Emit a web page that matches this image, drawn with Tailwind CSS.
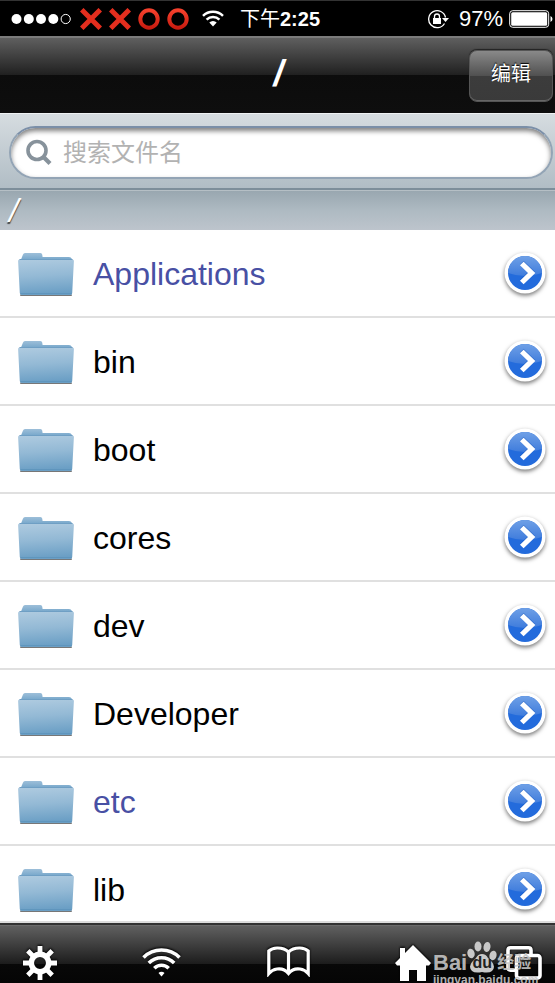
<!DOCTYPE html>
<html lang="zh-CN">
<head>
<meta charset="utf-8">
<meta name="viewport" content="width=device-width, initial-scale=1">
<title>/</title>
<script src="https://cdn.jsdelivr.net/npm/@tailwindcss/browser@4"></script>
</head>
<body class="relative flex h-screen flex-col overflow-hidden bg-white font-['Liberation_Sans','Noto_Sans_CJK_SC',sans-serif]">
<svg class="absolute size-0" aria-hidden="true">
  <defs>
    <linearGradient id="red" x1="0" y1="0" x2="0" y2="1"><stop offset="0" stop-color="#f5402c"/><stop offset="1" stop-color="#c91c10"/></linearGradient>
    <linearGradient id="back" x1="0" y1="0" x2="0" y2="1"><stop offset="0" stop-color="#9dbfd9"/><stop offset="1" stop-color="#6a9fc6"/></linearGradient>
    <linearGradient id="front" x1="0" y1="0" x2=".1" y2="1"><stop offset="0" stop-color="#afcbe0"/><stop offset=".5" stop-color="#93b9d5"/><stop offset="1" stop-color="#6b9fc5"/></linearGradient>
    <linearGradient id="gloss" x1="0" y1="0" x2="0" y2="1"><stop offset="0" stop-color="#6fa0e6"/><stop offset="1" stop-color="#3f7cdc"/></linearGradient>
    <symbol id="folder" viewBox="0 0 58 46">
      <path d="M3 43.500h52v.7q0 .8-1 .8H4q-1 0-1-.8z" fill="#777"/>
      <path d="M4 8.500 6 3.500Q6.500 2 8 2h15.500q1.500 0 1.700 1.500l.4 2.500H52q2 0 3 2l1 3H3z" fill="url(#back)"/>
      <path d="M2.500 8.500h53q1.500 0 1.400 1.600L55.200 42q-.1 2-1.700 2h-49q-1.600 0-1.700-2L1.100 10.100Q1 8.500 2.500 8.500z" fill="url(#front)"/>
      <path d="M2.500 8.500h53" stroke="#6f9fc4" stroke-width="1"/>
      <path d="M3.500 42.500h51" stroke="#5c93bb" stroke-width=".8"/>
    </symbol>
    <symbol id="go" viewBox="0 0 48 50">
      <circle cx="24" cy="24" r="20.500" fill="#fff"/>
      <circle cx="24" cy="24" r="17" fill="#236bdc"/>
      <path d="M7 24a17 17 0 0 1 34 0Q24 30 7 24z" fill="url(#gloss)"/>
      <path d="m20.800 13.500 9.800 9.500-9.800 9.500" fill="none" stroke="#1250b5" stroke-opacity=".4" stroke-width="5.200"/>
      <path d="m20.800 14.500 9.800 9.500-9.800 9.500" fill="none" stroke="#fff" stroke-width="5.200"/>
    </symbol>
    <symbol id="cross" viewBox="0 0 22 22"><path d="m3.500 3.500 15 15M18.500 3.500l-15 15" stroke="#e42e1e" stroke-width="5" stroke-linecap="square"/></symbol>
    <symbol id="ring" viewBox="0 0 22 22"><circle cx="11" cy="11" r="8.700" fill="none" stroke="url(#red)" stroke-width="4"/></symbol>
  </defs>
</svg>

<div class="flex h-9 shrink-0 items-center border-t border-[#333] bg-black pl-[11px] pr-[2px] text-white">
  <svg class="h-3 w-[61px]" viewBox="0 0 61 12" role="img" aria-label="4/5"><g fill="#fff"><circle cx="5.500" cy="6" r="5"/><circle cx="17.800" cy="6" r="5"/><circle cx="30" cy="6" r="5"/><circle cx="42.300" cy="6" r="5"/></g><circle cx="54.700" cy="6" r="4.600" fill="none" stroke="#fff"/></svg>
  <div class="ml-2 flex items-center gap-[7px]">
    <svg class="size-[22px]"><use href="#cross"/></svg>
    <svg class="size-[22px]"><use href="#cross"/></svg>
    <svg class="size-[22px]"><use href="#ring"/></svg>
    <svg class="size-[22px]"><use href="#ring"/></svg>
  </div>
  <svg class="ml-[13px] h-[17px] w-[22px]" viewBox="0 0 22 17"><path d="M1 5.800a14.300 14.300 0 0 1 20 0M4.600 9.600a9.200 9.200 0 0 1 12.800 0" fill="none" stroke="#fff" stroke-width="2.500"/><path d="M7.300 12.600a5.300 5.300 0 0 1 7.400 0L11 16.500z" fill="#fff"/></svg>
  <div class="ml-4 text-xl leading-6"><span>下午</span><span class="font-bold">2:25</span></div>
  <svg class="ml-auto h-5 w-[22px]" viewBox="0 0 22 20"><path d="M17.500 14.500a8.500 8.500 0 1 1 1-6" fill="none" stroke="#fff" stroke-width="1.300"/><path d="M15 9h7l-3.500 4z" fill="#fff"/><rect x="6" y="9" width="8" height="6" fill="#fff"/><path d="M7.500 9.500V7.500a2.500 2.500 0 0 1 5 0v2" fill="none" stroke="#fff" stroke-width="1.300"/></svg>
  <span class="ml-[10px] text-[22px] leading-6">97%</span>
  <svg class="ml-[6px] h-[18px] w-11" viewBox="0 0 44 18"><rect x=".7" y=".7" width="39" height="16.600" rx="3" fill="none" stroke="#fff" stroke-width="1"/><rect x="2.200" y="2.200" width="36" height="13.600" rx="1.500" fill="#fff"/><path d="M41.500 6q2 1 2 3t-2 3z" fill="#fff"/></svg>
</div>

<header class="grid h-[77px] shrink-0 grid-cols-[1fr_auto_1fr] items-center border-t-2 border-[#7b7b7b] bg-[linear-gradient(#5f5f5f_0,#1f1f1f_50%,#0c0c0c_50%,#0e0e0e_100%)] pr-[2px]">
  <h1 class="col-start-2 pb-1 pl-1 text-4xl font-bold italic leading-10 text-white">/</h1>
  <button class="h-[52px] w-[84px] justify-self-end rounded-lg border border-[#555] bg-[linear-gradient(#898989_0,#505050_50%,#3c3c3c_51%,#3a3a3a_100%)] pb-1 text-xl text-white shadow-[0_-1px_1px_#222,inset_0_-1px_0_#666] [text-shadow:0_-1px_1px_#000]">编辑</button>
</header>

<div class="h-[77px] shrink-0 border-b-2 border-t border-b-[#7d8e9a] border-t-[#eef1f3] bg-[linear-gradient(#d6dce0,#b1bdc5)] pl-[9px] pr-[2px] pt-3">
  <label class="flex h-[53px] items-center gap-[10px] rounded-full border-2 border-[#93a4b5] border-t-[#7b8fa8] bg-white pl-[14px] pr-5 shadow-[inset_0_3px_5px_#00000080]">
    <svg class="size-7 shrink-0" viewBox="0 0 28 28" fill="none" stroke="#87929b"><circle cx="12" cy="11.500" r="9" stroke-width="3.600"/><path d="m18.500 18 6.500 6.500" stroke-width="4.200"/></svg>
    <input type="search" aria-label="搜索文件名" placeholder="搜索文件名" class="w-full min-w-0 bg-transparent text-2xl leading-8 outline-none placeholder:text-[#b2b2b2]">
  </label>
</div>

<div class="h-10 shrink-0 border-t border-[#b5bfc5] bg-[linear-gradient(#99a7b0,#aebac2_50%,#bdc4cc)] pl-[9px] text-[34px] italic leading-[38px] text-white [text-shadow:0_2px_1px_#444]">/</div>

<ul class="min-h-0 flex-1 overflow-hidden text-[32px] leading-10 text-black">
  <li class="flex h-[88px] items-center border-b-2 border-[#e0e0e0] pl-[17px] pr-[6px] pt-[2px]"><svg class="h-[46px] w-[58px]"><use href="#folder"/></svg><a href="#" class="ml-[18px] flex-1 text-[#4850a4]">Applications</a><button aria-label="Applications"><svg class="h-[50px] w-12 drop-shadow-[0_2px_2px_#0008]"><use href="#go"/></svg></button></li>
  <li class="flex h-[88px] items-center border-b-2 border-[#e0e0e0] pl-[17px] pr-[6px] pt-[2px]"><svg class="h-[46px] w-[58px]"><use href="#folder"/></svg><a href="#" class="ml-[18px] flex-1">bin</a><button aria-label="bin"><svg class="h-[50px] w-12 drop-shadow-[0_2px_2px_#0008]"><use href="#go"/></svg></button></li>
  <li class="flex h-[88px] items-center border-b-2 border-[#e0e0e0] pl-[17px] pr-[6px] pt-[2px]"><svg class="h-[46px] w-[58px]"><use href="#folder"/></svg><a href="#" class="ml-[18px] flex-1">boot</a><button aria-label="boot"><svg class="h-[50px] w-12 drop-shadow-[0_2px_2px_#0008]"><use href="#go"/></svg></button></li>
  <li class="flex h-[88px] items-center border-b-2 border-[#e0e0e0] pl-[17px] pr-[6px] pt-[2px]"><svg class="h-[46px] w-[58px]"><use href="#folder"/></svg><a href="#" class="ml-[18px] flex-1">cores</a><button aria-label="cores"><svg class="h-[50px] w-12 drop-shadow-[0_2px_2px_#0008]"><use href="#go"/></svg></button></li>
  <li class="flex h-[88px] items-center border-b-2 border-[#e0e0e0] pl-[17px] pr-[6px] pt-[2px]"><svg class="h-[46px] w-[58px]"><use href="#folder"/></svg><a href="#" class="ml-[18px] flex-1">dev</a><button aria-label="dev"><svg class="h-[50px] w-12 drop-shadow-[0_2px_2px_#0008]"><use href="#go"/></svg></button></li>
  <li class="flex h-[88px] items-center border-b-2 border-[#e0e0e0] pl-[17px] pr-[6px] pt-[2px]"><svg class="h-[46px] w-[58px]"><use href="#folder"/></svg><a href="#" class="ml-[18px] flex-1">Developer</a><button aria-label="Developer"><svg class="h-[50px] w-12 drop-shadow-[0_2px_2px_#0008]"><use href="#go"/></svg></button></li>
  <li class="flex h-[88px] items-center border-b-2 border-[#e0e0e0] pl-[17px] pr-[6px] pt-[2px]"><svg class="h-[46px] w-[58px]"><use href="#folder"/></svg><a href="#" class="ml-[18px] flex-1 text-[#4850a4]">etc</a><button aria-label="etc"><svg class="h-[50px] w-12 drop-shadow-[0_2px_2px_#0008]"><use href="#go"/></svg></button></li>
  <li class="flex h-[88px] items-center border-b-2 border-[#e0e0e0] pl-[17px] pr-[6px] pt-[2px]"><svg class="h-[46px] w-[58px]"><use href="#folder"/></svg><a href="#" class="ml-[18px] flex-1">lib</a><button aria-label="lib"><svg class="h-[50px] w-12 drop-shadow-[0_2px_2px_#0008]"><use href="#go"/></svg></button></li>
</ul>

<nav class="flex h-[62px] shrink-0 items-end justify-between border-t-2 border-[#ddd] bg-[linear-gradient(#333_0,#333_2px,#777_2px,#606060_3px,#1c1c1c_41px,#080808_41px,#050505_100%)] pl-[23px] pr-[13px]">
  <button aria-label="设置" class="pb-[3px]"><svg class="size-[34px] drop-shadow-[0_-1px_1px_#000]" viewBox="-17 -17 34 34" fill="none" stroke="#fff"><circle r="8.700" stroke-width="5.500"/><path d="M0-10V-17M0 10V17M-10 0H-17M10 0H17M-7-7-12.200-12.200M7 7 12.200 12.200M-7 7-12.200 12.200M7-7 12.200-12.200" stroke-width="4.800"/></svg></button>
  <button aria-label="Wi-Fi" class="pb-[6px]"><svg class="h-[30px] w-[39px] drop-shadow-[0_-1px_1px_#000]" viewBox="0 0 39 30" fill="none" stroke="#fff" stroke-width="3.600"><path d="M1.500 10.500a25.500 25.500 0 0 1 36 0M6.800 16a18 18 0 0 1 25.400 0M12.300 21.300a10.200 10.200 0 0 1 14.400 0"/><path d="M16.500 26a4.200 4.200 0 0 1 6 0l-3 3.500z" fill="#fff" stroke="none"/></svg></button>
  <button aria-label="书签" class="pb-[6px]"><svg class="h-[31px] w-[43px] drop-shadow-[0_-1px_1px_#000]" viewBox="0 0 43 31" fill="none" stroke="#fff" stroke-width="3.200"><path d="M21.500 27.500Q17 22 10 23q-5 .7-8.200 4.500V5Q5 2.200 10 2q7-.3 11.500 4 4.500-4.300 11.500-4 5 .2 8.200 3v22.500Q38 23.700 33 23q-7-1-11.500 4.500zM21.500 6v21"/></svg></button>
  <div class="flex items-end gap-[75px]">
    <button aria-label="主页" class="pb-[2px]"><svg class="size-9 drop-shadow-[0_-1px_1px_#000]" viewBox="0 0 36 36"><path d="M18 0 36 18l-2 2.500h-3V36h-9V25h-8v11H5V20.500H2L0 18l5-5V3h5v5z" fill="#fff"/></svg></button>
    <button aria-label="窗口" class="pb-[3px]"><svg class="h-[34px] w-9 drop-shadow-[0_-1px_1px_#000]" viewBox="0 0 36 34" fill="none" stroke="#fff" stroke-width="3.600"><path d="M10 24.200H4.500Q2 24.200 2 21.700V4.300Q2 1.800 4.500 1.800h18Q25 1.800 25 4.300V9"/><rect x="10.500" y="9.500" width="23.500" height="22.500" rx="2.500"/></svg></button>
  </div>
</nav>

<div class="pointer-events-none absolute bottom-[-4px] right-3 w-[110px] text-[#c8c8c8]/90">
  <div class="flex items-end leading-5">
    <span class="text-[22px] font-bold">Bai</span>
    <span class="relative flex h-8 w-[30px] shrink-0 items-end justify-center">
      <svg class="absolute inset-0 h-8 w-[30px]" viewBox="0 0 30 32" fill="#c8c8c8"><ellipse cx="4" cy="12.500" rx="3.600" ry="4.800" transform="rotate(-15 4 12.500)"/><ellipse cx="11" cy="5.500" rx="3.500" ry="5"/><ellipse cx="20" cy="6" rx="3.500" ry="5" transform="rotate(10 20 6)"/><ellipse cx="26" cy="14.500" rx="3.500" ry="4.800" transform="rotate(15 26 14.500)"/><path d="M15 13q4 0 6 4l4 4q4 5 0 9-3 2.500-10 1-7 1.500-10-1-4-4 0-9l4-4q2-4 6-4z"/></svg>
      <span class="relative text-base font-bold leading-5 text-[#222]">du</span>
    </span>
    <span class="shrink-0 text-[17px] font-bold">经验</span>
  </div>
  <div class="text-xs font-bold leading-[14px]">jingyan.baidu.com</div>
</div>
</body>
</html>
